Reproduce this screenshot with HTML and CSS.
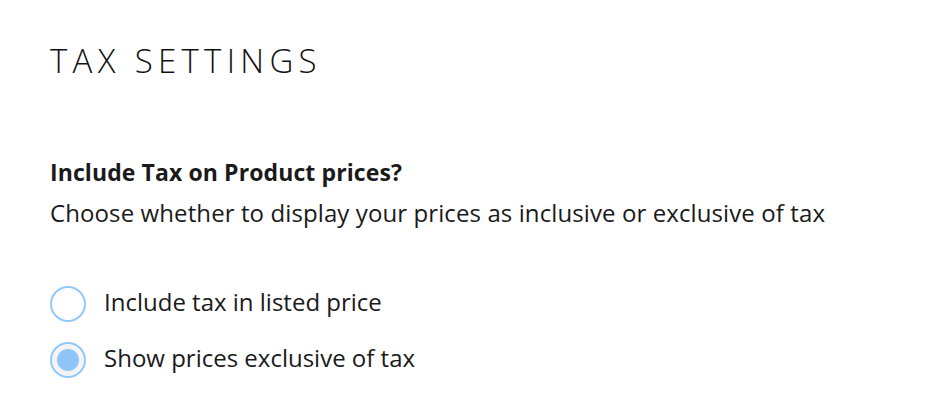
FILE: index.html
```html
<!DOCTYPE html>
<html lang="en">
<head>
    <meta charset="UTF-8">
    <meta name="viewport" content="width=device-width, initial-scale=1.0">
    <title>Tax Settings</title>
    <link rel="stylesheet" href="styles.css">
</head>
<body>
    <div class="container">
        <h2 class="page-title">TAX SETTINGS</h2>

        <!-- Tax option -->
        <section class="setting">
            <h4>Include Tax on Product prices?</h4>
            <p class="hint">Choose whether to display your prices as inclusive or exclusive of tax</p>

            <div class="options">
                <label class="option">
                    <input type="radio" name="tax_mode" value="include">
                    <span class="radio"></span>
                    <span class="option-label">Include tax in listed price</span>
                </label>
                <label class="option">
                    <input type="radio" name="tax_mode" value="exclude" checked>
                    <span class="radio"></span>
                    <span class="option-label">Show prices exclusive of tax</span>
                </label>
            </div>
        </section>
    </div>
</body>
</html>
```

FILE: styles.css
```css
body {
    background-color: #ffffff;
    color: #1a1a1a;
    font-family: 'Open Sans', 'Helvetica Neue', Arial, sans-serif;
    margin: 0;
    padding: 0;
}

.container {
    padding: 41px 50px 0;
}

.page-title {
    margin: 0;
    font-size: 33px;
    font-weight: 300;
    letter-spacing: 5.3px;
    line-height: 40px;
    color: #111;
}

.setting {
    margin-top: 76px;
}

.setting h4 {
    margin: 0;
    font-size: 23px;
    font-weight: 700;
    letter-spacing: 0.1px;
    line-height: 30px;
}

.hint {
    margin: 11px 0 0;
    font-size: 24px;
    letter-spacing: 0.1px;
    line-height: 30px;
}

.options {
    display: flex;
    flex-direction: column;
    gap: 20px;
    margin-top: 58px;
}

.option {
    display: flex;
    align-items: center;
    gap: 18px;
    font-size: 24px;
    cursor: pointer;
}

.option input {
    display: none;
}

.option-label {
    line-height: 32px;
    padding-bottom: 4px;
}

.radio {
    width: 32px;
    height: 32px;
    border: 2px solid #93c8f7;
    border-radius: 50%;
    background-color: #ffffff;
    display: flex;
    align-items: center;
    justify-content: center;
    flex-shrink: 0;
}

.option input:checked + .radio {
    background-color: #f4f4f4;
}

.option input:checked + .radio::after {
    content: "";
    width: 22px;
    height: 22px;
    border-radius: 50%;
    background-color: #8fc5f6;
}
```
